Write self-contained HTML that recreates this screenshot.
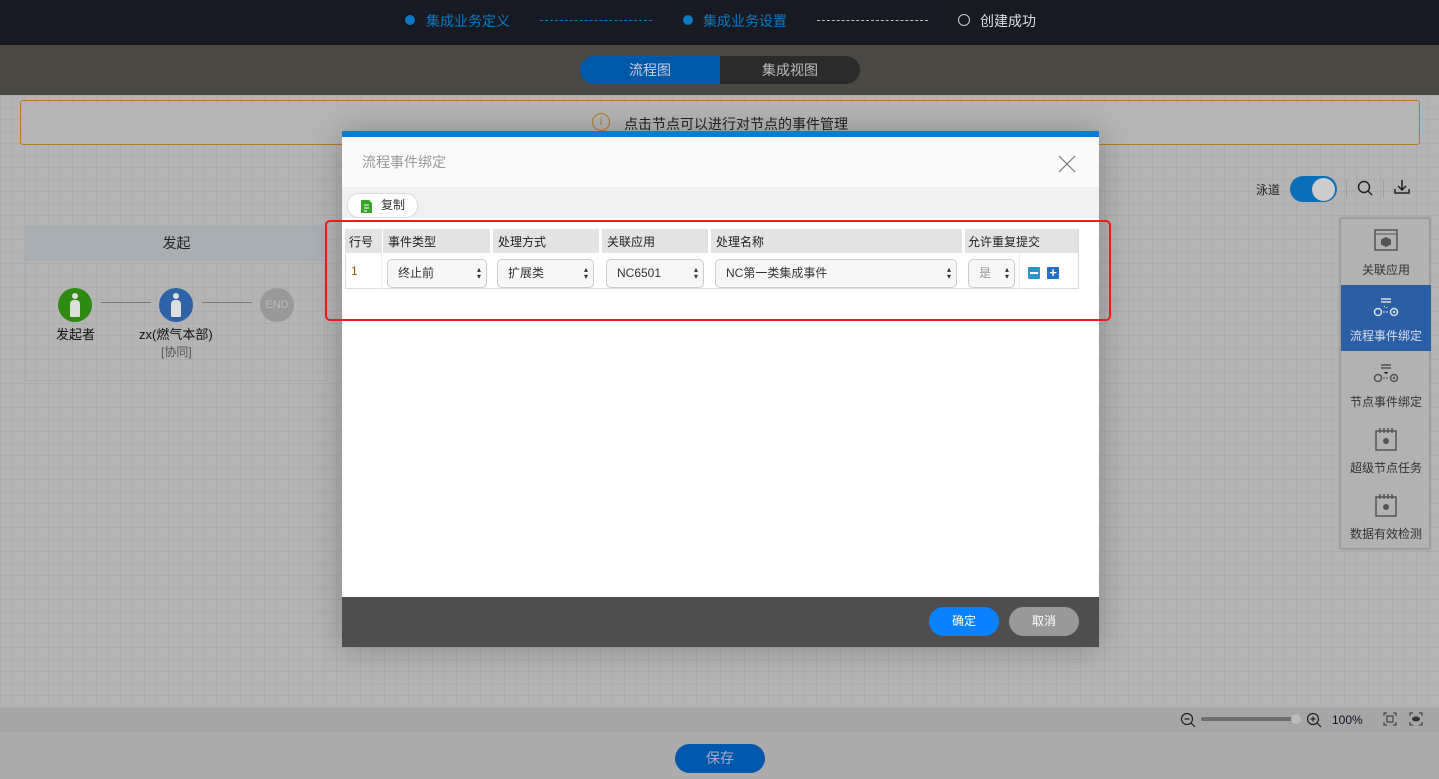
<!DOCTYPE html>
<html><head><meta charset="utf-8"><style>
*{box-sizing:border-box;margin:0;padding:0}
body{width:1439px;height:779px;overflow:hidden;position:relative;font-family:"Liberation Sans","Noto Sans CJK SC",sans-serif;font-size:13px;background:#b3b3b3}
.abs{position:absolute}
.grid{left:0;top:95px;width:1439px;height:613px;background-color:#b4b4b4;background-image:linear-gradient(#acacac 1px,transparent 1px),linear-gradient(90deg,#acacac 1px,transparent 1px);background-size:12px 12px}
.sel{position:absolute;top:5px;height:29px;border:1px solid #ccc;border-radius:5px;background:#f7f7f7;font-size:12px;line-height:27px;padding-left:10px;color:#333}
.sel:after{content:"\25B4\A\25BE";white-space:pre;position:absolute;right:5px;top:6px;font-size:8px;line-height:7px;color:#333}
.ri{position:absolute;left:0;width:90px;height:66px;text-align:center;font-size:12px;color:#333}
.ri span{position:absolute;left:0;right:0;top:42px}
</style></head><body>
<div class="abs" style="left:0;top:0;width:1439px;height:45px;background:#171a22"></div>
<div class="abs" style="left:405px;top:15px;width:10px;height:10px;border-radius:50%;background:#0a78c2"></div>
<div class="abs" style="left:426px;top:11px;color:#0a78c2;font-size:14px">集成业务定义</div>
<div class="abs" style="left:540px;top:20px;width:112px;border-top:1px dashed #0a78c2"></div>
<div class="abs" style="left:683px;top:15px;width:10px;height:10px;border-radius:50%;background:#0a78c2"></div>
<div class="abs" style="left:703px;top:11px;color:#0a78c2;font-size:14px">集成业务设置</div>
<div class="abs" style="left:817px;top:20px;width:111px;border-top:1px dashed #bbb"></div>
<div class="abs" style="left:958px;top:14px;width:12px;height:12px;border-radius:50%;border:1.5px solid #ccc"></div>
<div class="abs" style="left:980px;top:11px;color:#ddd;font-size:14px">创建成功</div>
<div class="abs" style="left:0;top:45px;width:1439px;height:50px;background:#4a4843"></div>
<div class="abs" style="left:580px;top:56px;width:280px;height:28px;border-radius:14px;background:#2b2b2b"></div>
<div class="abs" style="left:580px;top:56px;width:140px;height:28px;border-radius:14px 0 0 14px;background:#0058a8;color:#ccd;text-align:center;line-height:28px;font-size:14px">流程图</div>
<div class="abs" style="left:720px;top:56px;width:140px;height:28px;color:#bbb;text-align:center;line-height:28px;font-size:14px">集成视图</div>
<div class="abs grid"></div>
<div class="abs" style="left:20px;top:100px;width:1400px;height:45px;border:1px solid #b87a20;border-radius:3px;background:#b5b5b5"></div>
<div class="abs" style="left:592px;top:113px;width:18px;height:18px;border-radius:50%;border:1px solid #b87a20;color:#b87a20;font-size:11px;text-align:center;line-height:16px">i</div>
<div class="abs" style="left:624px;top:114px;color:#222;font-size:14px">点击节点可以进行对节点的事件管理</div>
<div class="abs" style="left:25px;top:225px;width:303px;height:156px;border:1px solid #a7adb5"></div>
<div class="abs" style="left:26px;top:226px;width:301px;height:35px;background:#a9aeb3;border-bottom:1px solid #a3acb8;text-align:center;line-height:35px;font-size:14px;color:#222">发起</div>
<div class="abs" style="left:101px;top:302px;width:50px;border-top:1px solid #777"></div>
<div class="abs" style="left:202px;top:302px;width:50px;border-top:1px solid #777"></div>
<div class="abs" style="left:58px;top:288px;width:34px;height:34px;border-radius:50%;background:#2e8a10"></div>
<div class="abs" style="left:159px;top:288px;width:34px;height:34px;border-radius:50%;background:#2e63a8"></div>
<div class="abs" style="left:72px;top:293px;width:6px;height:6px;background:#ddd;border-radius:50%"></div>
<div class="abs" style="left:70px;top:300px;width:10px;height:17px;background:#ddd;border-radius:4px 4px 1px 1px"></div>
<div class="abs" style="left:173px;top:293px;width:6px;height:6px;background:#ddd;border-radius:50%"></div>
<div class="abs" style="left:171px;top:300px;width:10px;height:17px;background:#ddd;border-radius:4px 4px 1px 1px"></div>
<div class="abs" style="left:260px;top:288px;width:34px;height:34px;border-radius:50%;background:#999;color:#bbb;font-size:11px;text-align:center;line-height:34px">END</div>
<div class="abs" style="left:56px;top:324px;font-size:13px;color:#111">发起者</div>
<div class="abs" style="left:139px;top:324px;font-size:13px;color:#111">zx(燃气本部)</div>
<div class="abs" style="left:161px;top:343px;font-size:12px;color:#555">[协同]</div>
<div class="abs" style="left:1256px;top:181px;font-size:12px;color:#222">泳道</div>
<div class="abs" style="left:1290px;top:176px;width:47px;height:26px;border-radius:13px;background:#0a6fb8"></div>
<div class="abs" style="left:1312px;top:178px;width:23px;height:23px;border-radius:50%;background:#ccc"></div>
<div class="abs" style="left:1346px;top:180px;height:18px;border-left:1px solid #a0a0a0"></div>
<svg class="abs" style="left:1357px;top:180px" width="16" height="16"><circle cx="7" cy="7" r="5.5" fill="none" stroke="#222" stroke-width="1.5"/><line x1="11" y1="11" x2="15" y2="15" stroke="#222" stroke-width="1.5"/></svg>
<div class="abs" style="left:1383px;top:180px;height:18px;border-left:1px solid #a0a0a0"></div>
<svg class="abs" style="left:1394px;top:179px" width="16" height="16"><path d="M8 1v10M4 7l4 4 4-4M1 10v4h14v-4" fill="none" stroke="#222" stroke-width="1.5"/></svg>
<div class="abs" style="left:1340px;top:218px;width:90px;height:331px;background:#b2b2b2;border:1px solid #999;box-shadow:0 0 3px #888">
<div class="ri" style="top:0"><svg style="margin-top:10px" width="24" height="22"><rect x="1" y="1" width="22" height="20" fill="none" stroke="#555" stroke-width="1.5"/><line x1="1" y1="5" x2="23" y2="5" stroke="#555"/><path d="M12 8l5 2.5v5L12 18l-5-2.5v-5z" fill="#555"/></svg><span>关联应用</span></div>
<div class="ri" style="top:66px;background:#2a5fa6;color:#dde"><svg style="margin-top:12px" width="26" height="22"><path d="M8 2h10M8 5h10" stroke="#ddd" stroke-width="1.5"/><circle cx="5" cy="15" r="3.5" fill="none" stroke="#ddd" stroke-width="1.5"/><circle cx="21" cy="15" r="3.5" fill="none" stroke="#ddd" stroke-width="1.5"/><circle cx="21" cy="15" r="1.2" fill="#ddd"/><path d="M11 9l2 2 2-2M10 15h6" stroke="#ddd" stroke-dasharray="2 1"/></svg><span>流程事件绑定</span></div>
<div class="ri" style="top:132px"><svg style="margin-top:12px" width="26" height="22"><path d="M8 2h10M8 5h10" stroke="#555" stroke-width="1.5"/><circle cx="5" cy="15" r="3.5" fill="none" stroke="#555" stroke-width="1.5"/><circle cx="21" cy="15" r="3.5" fill="none" stroke="#555" stroke-width="1.5"/><circle cx="21" cy="15" r="1.2" fill="#555"/><path d="M11 9l2 2 2-2M10 15h6" stroke="#555" stroke-dasharray="2 1"/></svg><span>节点事件绑定</span></div>
<div class="ri" style="top:198px"><svg style="margin-top:10px" width="22" height="24"><rect x="1" y="4" width="20" height="19" fill="none" stroke="#555" stroke-width="1.5"/><path d="M5 1v5M9 1v5M13 1v5M17 1v5" stroke="#555" stroke-width="1.5"/><circle cx="11" cy="14" r="3" fill="#555"/></svg><span>超级节点任务</span></div>
<div class="ri" style="top:264px"><svg style="margin-top:10px" width="22" height="24"><rect x="1" y="4" width="20" height="19" fill="none" stroke="#555" stroke-width="1.5"/><path d="M5 1v5M9 1v5M13 1v5M17 1v5" stroke="#555" stroke-width="1.5"/><circle cx="11" cy="14" r="3" fill="#555"/></svg><span>数据有效检测</span></div>
</div>
<div class="abs" style="left:0;top:708px;width:1439px;height:24px;background:#a6a6a6"></div>
<svg class="abs" style="left:1180px;top:712px" width="16" height="16"><circle cx="7" cy="7" r="5.5" fill="none" stroke="#222" stroke-width="1.2"/><path d="M4.5 7h5M11 11l4 4" stroke="#222" stroke-width="1.2"/></svg>
<div class="abs" style="left:1201px;top:717px;width:95px;height:4px;background:#6e6e6e;border-radius:2px"></div>
<div class="abs" style="left:1291px;top:714px;width:10px;height:10px;border-radius:50%;background:#bbb"></div>
<svg class="abs" style="left:1306px;top:712px" width="16" height="16"><circle cx="7" cy="7" r="5.5" fill="none" stroke="#222" stroke-width="1.2"/><path d="M4.5 7h5M7 4.5v5M11 11l4 4" stroke="#222" stroke-width="1.2"/></svg>
<div class="abs" style="left:1332px;top:713px;font-size:12px;color:#112">100%</div>
<svg class="abs" style="left:1383px;top:712px" width="14" height="14"><path d="M1 4V1h3M10 1h3v3M13 10v3h-3M4 13H1v-3" fill="none" stroke="#333"/><rect x="4" y="4" width="6" height="6" fill="none" stroke="#333"/></svg>
<svg class="abs" style="left:1409px;top:712px" width="14" height="14"><path d="M1 4V1h3M10 1h3v3M13 10v3h-3M4 13H1v-3" fill="none" stroke="#333"/><ellipse cx="7" cy="7" rx="4" ry="2.5" fill="#333"/></svg>
<div class="abs" style="left:0;top:732px;width:1439px;height:47px;background:#acacac"></div>
<div class="abs" style="left:675px;top:744px;width:90px;height:29px;border-radius:15px;background:#0058ad;color:#aac;text-align:center;line-height:29px;font-size:14px">保存</div>
<div class="abs" style="left:342px;top:131px;width:757px;height:516px;background:#fff;box-shadow:0 0 30px rgba(0,0,0,.25)">
<div style="height:6px;background:#0a7ae0"></div>
<div style="height:50px;background:#fafafa;position:relative"><div style="position:absolute;left:20px;top:15px;font-size:14px;color:#999">流程事件绑定</div>
<svg style="position:absolute;left:716px;top:18px" width="18" height="18"><path d="M1 1l16 16M17 1L1 17" stroke="#777" stroke-width="1.2"/></svg></div>
<div style="height:31px;background:#f0f0f0;position:relative"><div style="position:absolute;left:5px;top:6px;width:71px;height:25px;border:1px solid #ddd;border-radius:12px;background:#fff;font-size:12px;line-height:23px;padding-left:33px;color:#333">复制</div>
<svg style="position:absolute;left:18px;top:12px" width="13" height="15"><path d="M1 1h8l3 3v10H1z" fill="#3aa52b"/><path d="M4 6h5M4 9h5M4 12h3" stroke="#fff"/></svg></div>
<div style="position:absolute;left:3px;top:98px;width:734px;height:60px;border:1px solid #ddd;border-top:none"></div>
<div style="position:absolute;left:3px;top:98px;font-size:12px;color:#222">
<div class="abs" style="left:0;top:0;width:37px;height:24px;background:#e3e3e3;padding:4px 4px">行号</div>
<div class="abs" style="left:38px;top:0;width:107px;height:24px;background:#e3e3e3;padding:4px 5px">事件类型</div>
<div class="abs" style="left:148px;top:0;width:106px;height:24px;background:#e3e3e3;padding:4px 5px">处理方式</div>
<div class="abs" style="left:257px;top:0;width:106px;height:24px;background:#e3e3e3;padding:4px 5px">关联应用</div>
<div class="abs" style="left:366px;top:0;width:251px;height:24px;background:#e3e3e3;padding:4px 5px">处理名称</div>
<div class="abs" style="left:620px;top:0;width:113px;height:24px;background:#e3e3e3;padding:4px 3px">允许重复提交</div>
<div class="abs" style="left:0;top:25px;width:37px;height:35px;border-right:1px solid #eee;padding:10px 6px;color:#8a5a00">1</div>
<div class="sel" style="left:42px;top:30px;width:100px">终止前</div>
<div class="sel" style="left:152px;top:30px;width:97px">扩展类</div>
<div class="sel" style="left:261px;top:30px;width:98px">NC6501</div>
<div class="sel" style="left:370px;top:30px;width:242px">NC第一类集成事件</div>
<div class="sel" style="left:623px;top:30px;width:47px;color:#999">是</div>
<div class="abs" style="left:674px;top:25px;height:35px;border-left:1px solid #eee"></div>
<div class="abs" style="left:683px;top:38px;width:12px;height:12px;background:#2b95c8;border-radius:1px"><div style="margin:5px 2px;height:2px;background:#fff"></div></div>
<div class="abs" style="left:702px;top:38px;width:12px;height:12px;background:#1f6fc4;border-radius:1px;color:#fff;font-weight:bold;font-size:13px;line-height:12px;text-align:center">+</div>
</div>
<div style="position:absolute;left:0;top:466px;width:757px;height:50px;background:#4e4e4e">
<div class="abs" style="left:587px;top:10px;width:70px;height:29px;border-radius:15px;background:#0a82ff;color:#fff;text-align:center;line-height:29px;font-size:12px">确定</div>
<div class="abs" style="left:667px;top:10px;width:70px;height:29px;border-radius:15px;background:#999;color:#fff;text-align:center;line-height:29px;font-size:12px">取消</div>
</div></div>
<div class="abs" style="left:325px;top:220px;width:786px;height:101px;border:2px solid #f01818;border-radius:5px"></div>
</body></html>
